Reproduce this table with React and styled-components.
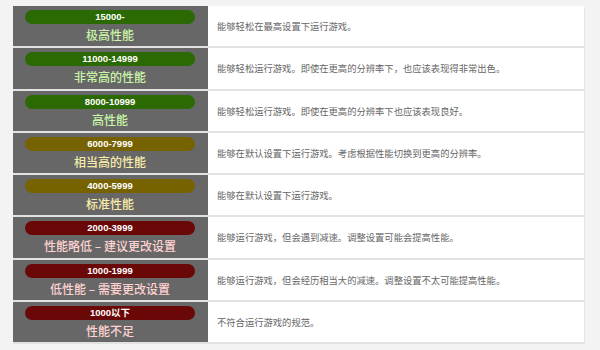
import styled, { createGlobalStyle } from "styled-components";

const GlobalStyle = createGlobalStyle`
  body {
    margin: 0;
    background: #f3f3f3;
    font-family: "Noto Sans CJK SC", "Liberation Sans", sans-serif;
  }
`;

const tiers = {
  high: { badge: "#2b6a03", title: "#c9f5a6" },
  mid: { badge: "#776200", title: "#f8eca8" },
  low: { badge: "#6a0808", title: "#ffd2d2" },
};

const rows = [
  { range: "15000-", name: "极高性能", tier: "high", desc: "能够轻松在最高设置下运行游戏。" },
  { range: "11000-14999", name: "非常高的性能", tier: "high", desc: "能够轻松运行游戏。即使在更高的分辨率下，也应该表现得非常出色。" },
  { range: "8000-10999", name: "高性能", tier: "high", desc: "能够轻松运行游戏。即使在更高的分辨率下也应该表现良好。" },
  { range: "6000-7999", name: "相当高的性能", tier: "mid", desc: "能够在默认设置下运行游戏。考虑根据性能切换到更高的分辨率。" },
  { range: "4000-5999", name: "标准性能", tier: "mid", desc: "能够在默认设置下运行游戏。" },
  { range: "2000-3999", name: "性能略低 – 建议更改设置", tier: "low", desc: "能够运行游戏，但会遇到减速。调整设置可能会提高性能。" },
  { range: "1000-1999", name: "低性能 – 需要更改设置", tier: "low", desc: "能够运行游戏，但会经历相当大的减速。调整设置不太可能提高性能。" },
  { range: "1000以下", name: "性能不足", tier: "low", desc: "不符合运行游戏的规范。" },
];

export default function App() {
  return (
    <>
      <GlobalStyle />
      <Table>
        {rows.map((r) => (
          <Row key={r.range}>
            <ScoreCell>
              <Badge $color={tiers[r.tier].badge}>{r.range}</Badge>
              <Title $color={tiers[r.tier].title}>{r.name}</Title>
            </ScoreCell>
            <DescCell>{r.desc}</DescCell>
          </Row>
        ))}
      </Table>
    </>
  );
}

const Table = styled.div`
  margin: 6px 16px 0 13px;
  display: flex;
  flex-direction: column;
  background: #fff;
  box-shadow: 1px 1px 0 #e6e6e6;
`;

const Row = styled.div`
  display: grid;
  grid-template-columns: 195px 1fr;
  height: 42.25px;
  box-sizing: border-box;
  border-bottom: 2px solid #e2e2e2;
`;

const ScoreCell = styled.div`
  background: #676767;
  display: flex;
  flex-direction: column;
  align-items: stretch;
  padding: 4px 13px 0 12px;
`;

const Badge = styled.div`
  height: 14px;
  border-radius: 7px;
  background: ${(p) => p.$color};
  color: #fff;
  font-family: "Liberation Sans", "Noto Sans CJK SC", sans-serif;
  font-weight: bold;
  font-size: 9.5px;
  line-height: 14px;
  text-align: center;
`;

const Title = styled.div`
  color: ${(p) => p.$color};
  font-size: 12px;
  font-weight: 500;
  line-height: 21px;
  text-align: center;
`;

const DescCell = styled.div`
  display: flex;
  align-items: center;
  padding: 0 9px;
  font-size: 9.3px;
  color: #666;
`;
